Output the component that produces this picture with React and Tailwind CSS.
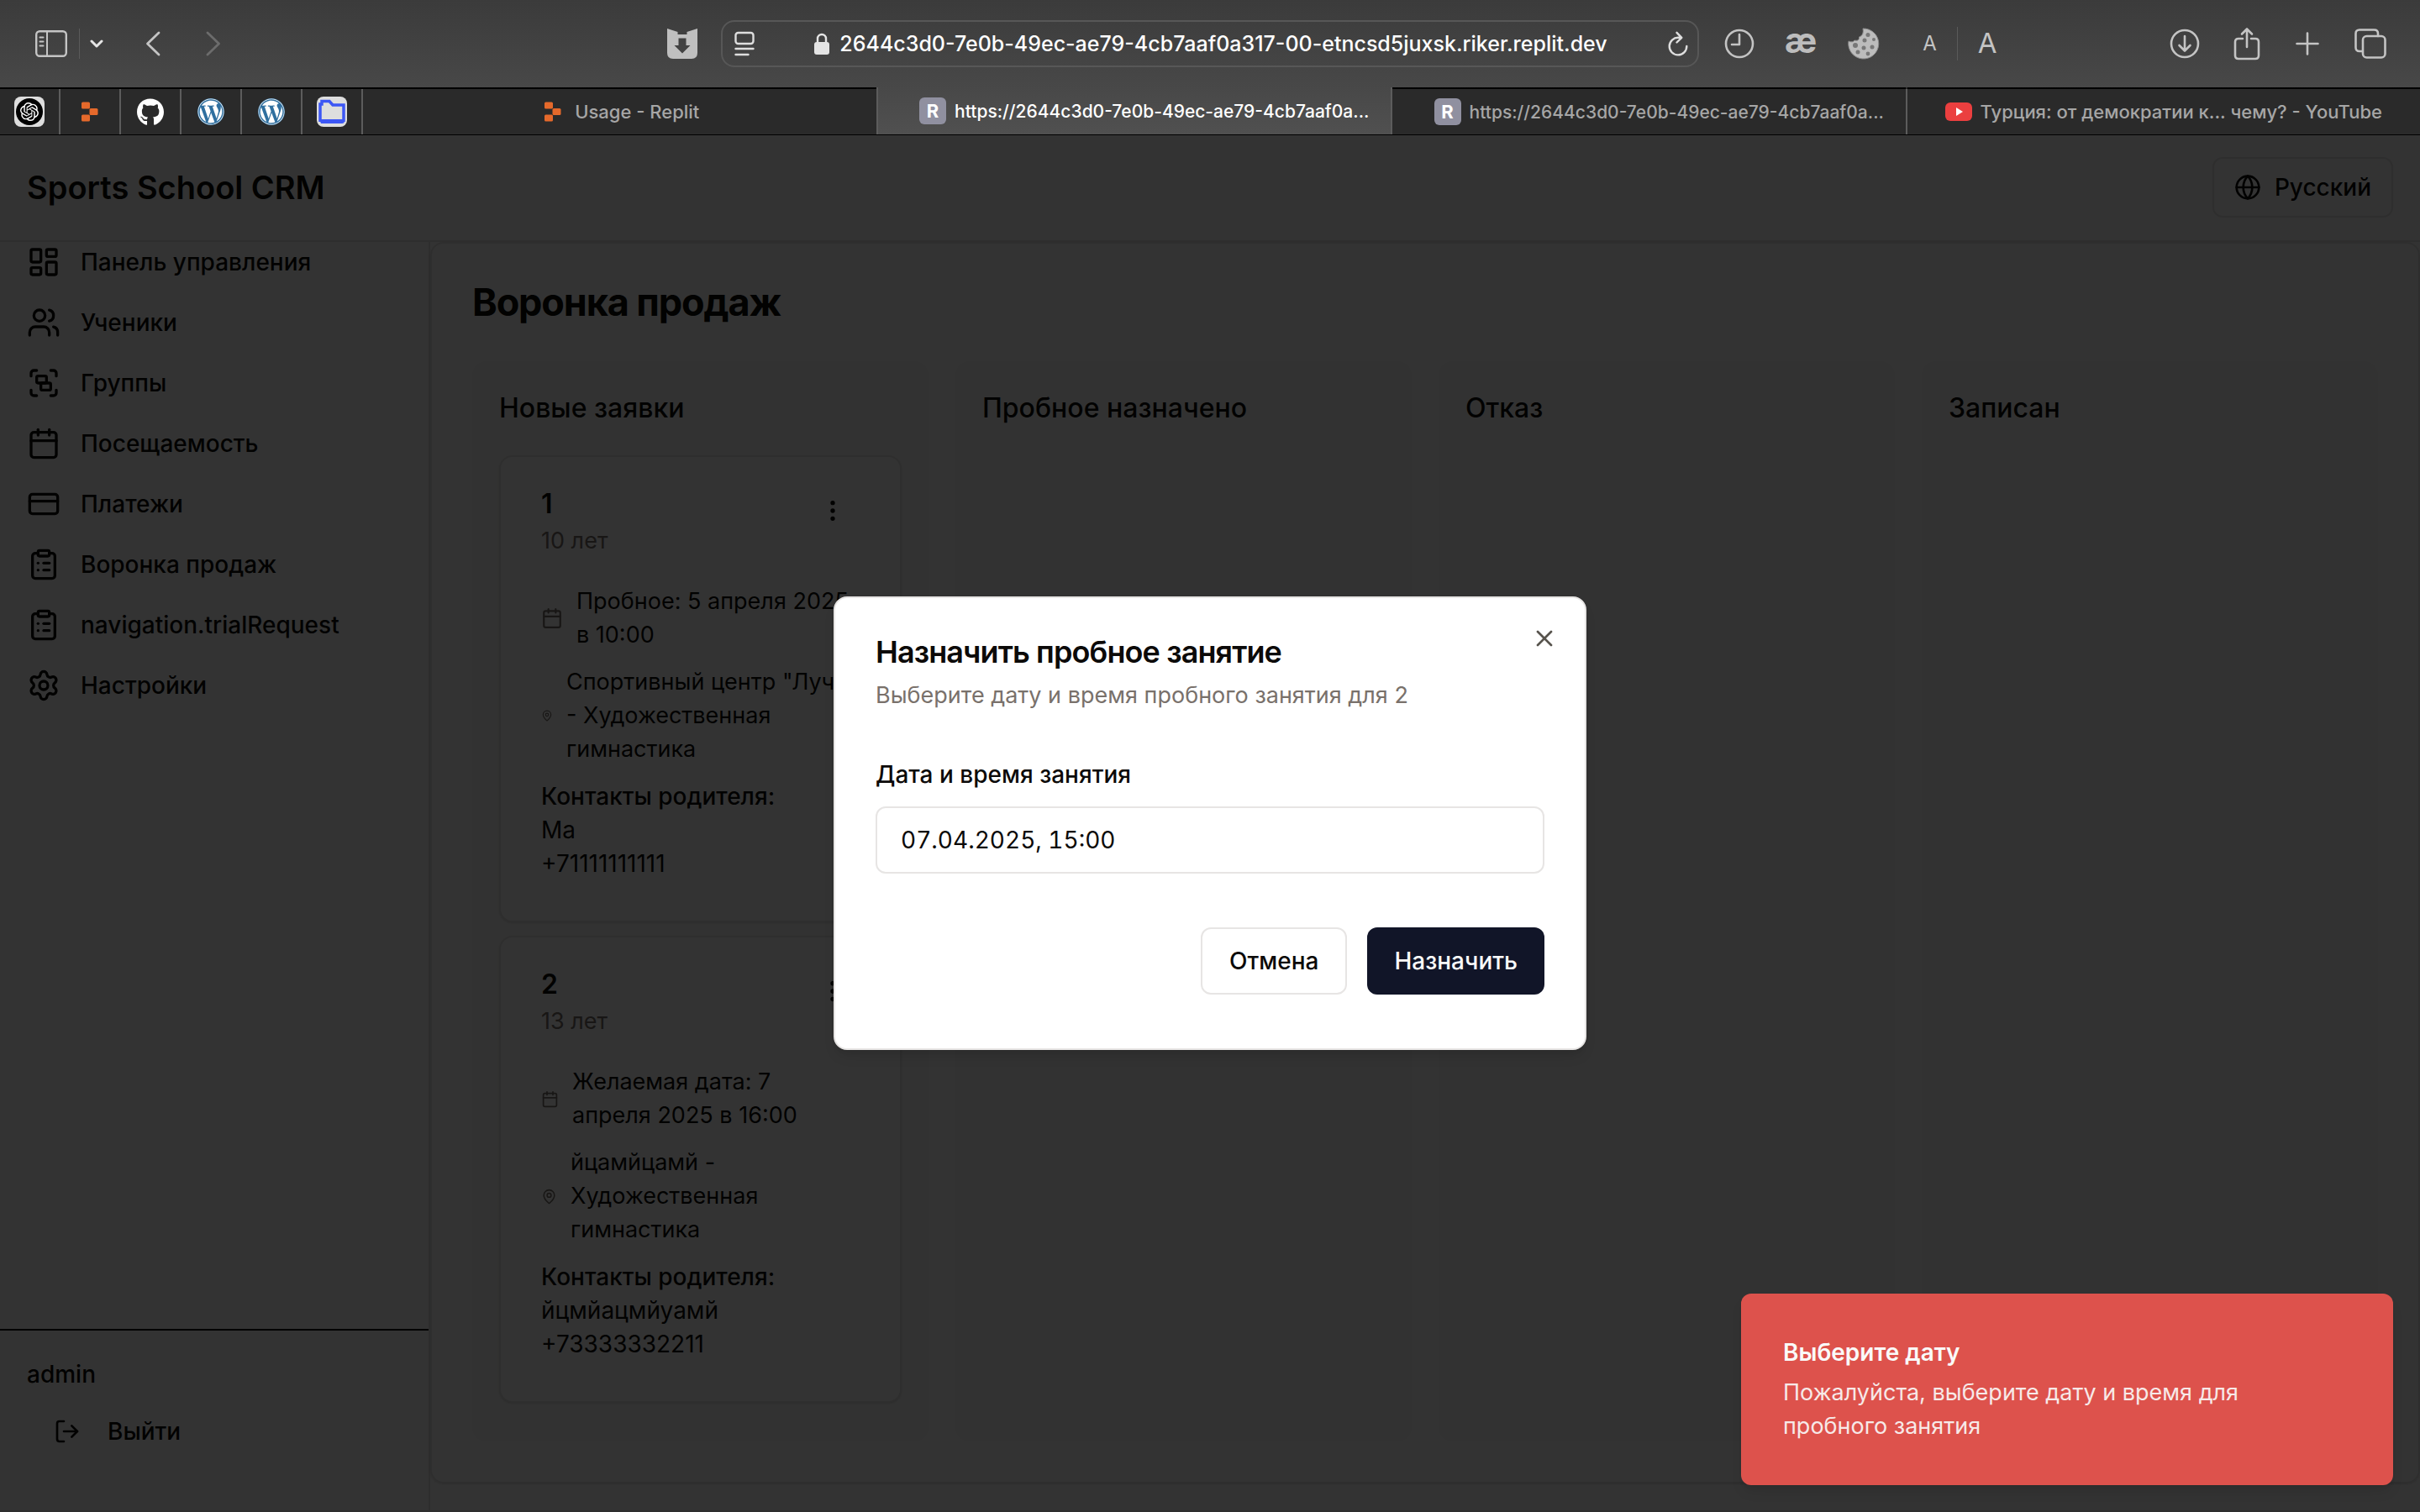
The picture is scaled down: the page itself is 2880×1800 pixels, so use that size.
import React from "react";
import { LayoutDashboard, Users, Group, Calendar, CreditCard, ClipboardList, Settings, LogOut, Globe, MapPin, MoreVertical, X } from "lucide-react";
import { FaGithub, FaWordpress } from "react-icons/fa";
import { SiOpenai } from "react-icons/si";

const stroke = { fill: "none", stroke: "currentColor", strokeLinecap: "round", strokeLinejoin: "round" };

function ReplitMark() {
  return (
    <svg viewBox="0 0 20 24" className="h-6 w-5" fill="#e5692b" aria-hidden="true">
      <rect x="0" y="0.500" width="10" height="8" rx="1.500" />
      <rect x="9.500" y="8" width="10" height="8" rx="1.500" />
      <rect x="0" y="15.500" width="10" height="8" rx="1.500" />
    </svg>
  );
}

function RBadge() {
  return (
    <span className="flex h-8 w-8 shrink-0 items-center justify-center rounded-md bg-[#9090a0] text-[22px] font-bold text-white">R</span>
  );
}

function Toolbar() {
  return (
    <div className="flex h-[104px] shrink-0 items-center bg-linear-to-b from-[#3b3b3b] to-[#484848] text-[#c4c4c4]">
      <div className="flex min-w-0 flex-1 items-center pr-7 pl-10">
        <button aria-label="Sidebar" className="ml-[2px]">
          <svg viewBox="0 0 38 32" className="h-8 w-[38px]" {...stroke} strokeWidth="2.4">
            <rect x="1.2" y="1.2" width="35.6" height="29.6" rx="4" />
            <path d="M14 1.5v29M5.5 8.5h4M5.5 13.5h4M5.5 18.5h4" strokeWidth="2" />
          </svg>
        </button>
        <span className="ml-[14px] h-9 w-px bg-[#5a5a5a]" />
        <button aria-label="Tab groups" className="ml-3">
          <svg viewBox="0 0 16 16" className="h-4 w-4 text-[#e6e6e6]" {...stroke} strokeWidth="3"><path d="M2 5l6 6 6-6" /></svg>
        </button>
        <button aria-label="Back" className="ml-[50px]">
          <svg viewBox="0 0 18 30" className="h-[30px] w-[18px]" {...stroke} strokeWidth="2.8"><path d="M16 2L2.500 15 16 28" /></svg>
        </button>
        <button aria-label="Forward" className="ml-[54px] text-[#6c6c6c]">
          <svg viewBox="0 0 18 30" className="h-[30px] w-[18px]" {...stroke} strokeWidth="2.8"><path d="M2 2l13.500 13L2 28" /></svg>
        </button>
        <button aria-label="Downloads helper" className="ml-auto">
          <svg viewBox="0 0 36 36" className="h-9 w-9" aria-hidden="true">
            <path fillRule="evenodd" d="M0 0l12.500 4v3h11V4L36 0v29q0 7-7 7H7q-7 0-7-7zM13.500 11.500v8.500H8.500l9.500 9.500 9.500-9.500h-5v-8.500z" fill="#bfbfbf" />
          </svg>
        </button>
      </div>
      <div className="flex h-14 w-[1164px] items-center rounded-2xl border-2 border-[#575757] pr-[10px] pl-[14px]">
        <svg viewBox="0 0 24 30" className="h-[30px] w-6 text-[#dedede]" {...stroke} strokeWidth="2.400">
          <rect x="1.500" y="2" width="21" height="13" rx="3" />
          <path d="M1.500 21h21M1.500 28h15" />
        </svg>
        <div className="flex flex-1 items-center justify-center gap-3">
          <svg viewBox="0 0 18 26" className="h-[26px] w-[18px]" aria-hidden="true">
            <rect x="0" y="11" width="18" height="15" rx="3" fill="#e4e4e4" />
            <path d="M4 12V7a5 5 0 0 1 10 0v5" fill="none" stroke="#e4e4e4" strokeWidth="2.400" />
          </svg>
          <span className="whitespace-nowrap text-[25px] leading-8 font-medium text-white">2644c3d0-7e0b-49ec-ae79-4cb7aaf0a317-00-etncsd5juxsk.riker.replit.dev</span>
        </div>
        <button aria-label="Reload">
          <svg viewBox="0 0 26 30" className="h-[30px] w-[26px] text-[#dedede]" {...stroke} strokeWidth="2.400">
            <path d="M17 7.800h-3.500A10.300 10.300 0 1 0 23.300 18M11.500 1.800L17.300 7.800l-5.800 5.700" />
          </svg>
        </button>
      </div>
      <div className="flex min-w-0 flex-1 items-center pr-10 pl-7">
        <button aria-label="History" className="ml-[2px]">
          <svg viewBox="0 0 36 36" className="h-9 w-9" {...stroke} strokeWidth="2.600"><circle cx="18" cy="18" r="16" /><path d="M18 7v12H9" /></svg>
        </button>
        <button aria-label="Extension ae" className="ml-9 text-[42px] leading-9 font-bold text-[#bdbdbd]">
          <span className="block pb-2">æ</span>
        </button>
        <button aria-label="Cookies" className="ml-9">
          <svg viewBox="0 0 40 40" className="h-10 w-10" aria-hidden="true">
            <path d="M19 2a18 18 0 1 1-17 15c3 1.500 6 1 7-1 4 1 6-1 5.500-4 4-1 5.500-5 4.500-10z" fill="#bcbcbc" stroke="#8c8c8c" />
            <g fill="#777"><circle cx="25" cy="9.500" r="2.500" /><circle cx="32" cy="15" r="2" /><circle cx="21" cy="16" r="2.500" /><circle cx="10" cy="22" r="3" /><circle cx="30" cy="24" r="2.500" /><circle cx="20" cy="25" r="2.500" /><circle cx="13" cy="30" r="2.500" /><circle cx="25" cy="32" r="2.400" /></g>
          </svg>
        </button>
        <button aria-label="Smaller text" className="ml-[50px] text-2xl">A</button>
        <span className="mx-6 h-10 w-px bg-[#5a5a5a]" />
        <button aria-label="Larger text" className="text-[33px]">A</button>
        <button aria-label="Downloads" className="ml-auto">
          <svg viewBox="0 0 36 36" className="h-9 w-9" {...stroke} strokeWidth="2.600"><circle cx="18" cy="18" r="16" /><path d="M18 9v17M11.500 20l6.500 6.500 6.500-6.500" /></svg>
        </button>
        <button aria-label="Share" className="ml-10">
          <svg viewBox="0 0 32 40" className="h-10 w-8" {...stroke} strokeWidth="2.600"><path d="M11 14H6q-4 0-4 4v16q0 4 4 4h20q4 0 4-4V18q0-4-4-4h-5M16 24V3M10 8.500L16 2.500l6 6" /></svg>
        </button>
        <button aria-label="New tab" className="ml-[42px]">
          <svg viewBox="0 0 28 28" className="h-7 w-7" {...stroke} strokeWidth="2.600"><path d="M14 1.500v25M1.500 14h25" /></svg>
        </button>
        <button aria-label="All tabs" className="ml-[42px]">
          <svg viewBox="0 0 38 36" className="h-9 w-[38px]" {...stroke} strokeWidth="2.600"><path d="M9 27H6q-4.500 0-4.500-4.500V6Q1.500 1.500 6 1.500h17.500q4.500 0 4.500 4.500v3" /><rect x="10" y="9" width="26.500" height="25.500" rx="4.500" /></svg>
        </button>
      </div>
    </div>
  );
}

function WordPress() {
  return (
    <span className="flex rounded-full bg-[#2f6f9f] text-white"><FaWordpress className="h-8 w-8" /></span>
  );
}

function TabBar() {
  const pin = "flex w-[72px] items-center justify-center border-r-2 border-[#5c5c5c]";
  const tab = "flex min-w-0 flex-1 items-center justify-center gap-[10px] border-t-2 border-black";
  const title = "whitespace-nowrap text-[22px] leading-8 font-medium";
  const address = "whitespace-nowrap pt-px text-[21px] leading-8 font-medium";
  return (
    <div className="flex h-14 shrink-0 bg-[#2a2a2a] text-[#a6a6a6]">
      <div className="flex border-t-2 border-black">
        <button aria-label="ChatGPT" className={pin}>
          <span className="flex h-9 w-9 items-center justify-center rounded-lg bg-[#dedede]">
            <span className="flex h-8 w-8 items-center justify-center rounded-full bg-black"><SiOpenai className="h-[22px] w-[22px] text-white" /></span>
          </span>
        </button>
        <button aria-label="Replit" className={pin}><ReplitMark /></button>
        <button aria-label="GitHub" className={pin}><FaGithub className="h-[33px] w-8 text-white" /></button>
        <button aria-label="WordPress" className={pin}><WordPress /></button>
        <button aria-label="WordPress" className={pin}><WordPress /></button>
        <button aria-label="Files" className={pin}>
          <span className="flex h-9 w-9 items-center justify-center rounded-lg bg-[#dedede]">
            <svg viewBox="0 0 34 30" className="h-[30px] w-[34px]" aria-hidden="true">
              <path d="M3 27V6h2V2.500h9L18 7h13v20" fill="none" stroke="#3d57f5" strokeWidth="3.500" />
              <path d="M2 24h30v2q0 3-3 3H4z" fill="#3d57f5" />
            </svg>
          </span>
        </button>
      </div>
      <button className={tab}><span className="flex w-8 justify-center"><ReplitMark /></span><span className={title}>Usage - Replit</span></button>
      <button className="flex min-w-0 flex-1 items-center justify-center border-x-2 border-[#5c5c5c] bg-linear-to-b from-[#484848] to-[#505050] text-white"><span className="flex items-center gap-[10px] pl-6"><RBadge /><span className={address}>https://2644c3d0-7e0b-49ec-ae79-4cb7aaf0a...</span></span></button>
      <button className={tab}><span className="flex items-center gap-[10px] pl-6"><RBadge /><span className={address}>https://2644c3d0-7e0b-49ec-ae79-4cb7aaf0a...</span></span></button>
      <span className="mt-[2px] w-[2px] bg-[#5c5c5c]" />
      <button className={tab}>
        <svg viewBox="0 0 32 22" className="h-[22px] w-8 shrink-0" aria-hidden="true"><rect width="32" height="22" rx="6" fill="#eb3f3f" /><path d="M13 6l8 5-8 5z" fill="#fff" /></svg>
        <span className={title}>Турция: от демократии к... чему? - YouTube</span>
      </button>
    </div>
  );
}

const nav = [
  [LayoutDashboard, "Панель управления"],
  [Users, "Ученики"],
  [Group, "Группы"],
  [Calendar, "Посещаемость"],
  [CreditCard, "Платежи"],
  [ClipboardList, "Воронка продаж"],
  [ClipboardList, "navigation.trialRequest"],
  [Settings, "Настройки"],
];

function Sidebar() {
  return (
    <aside className="flex w-[512px] shrink-0 flex-col border-r-2 border-stone-200">
      <nav className="flex flex-col">
        {nav.map(([Icon, label]) => (
          <a key={label} href="#" className="-mt-3 mb-3 flex h-[72px] items-center gap-6 px-8 font-medium"><Icon className="h-10 w-10" />{label}</a>
        ))}
      </nav>
      <div className="mt-auto border-t-2 border-black px-8 pt-8 pb-[62px]">
        <p className="font-medium">admin</p>
        <button className="mt-4 flex h-16 items-center gap-8 pl-8 font-medium"><LogOut className="h-8 w-8" />Выйти</button>
      </div>
    </aside>
  );
}

function Lead({ name, age, date, dateIcon, place, placeIcon, parent, phone }) {
  return (
    <article className="rounded-2xl border-2 border-stone-200 bg-white px-12 pb-12 shadow-sm">
      <div className="flex justify-between pt-8">
        <div>
          <h3 className="text-[32px] leading-[48px] font-semibold">{name}</h3>
          <p className="text-[27px] text-stone-500">{age}</p>
        </div>
        <button aria-label="Действия" className="flex h-16 w-16 items-center justify-center"><MoreVertical className="h-8 w-8" /></button>
      </div>
      <div className="mt-8 flex flex-col gap-4">
        <div className="flex items-center gap-4 text-[27px] whitespace-pre"><Calendar className={dateIcon} /><span>{date}</span></div>
        <div className="flex items-center gap-4 text-[27px] whitespace-pre"><MapPin className={placeIcon} /><span>{place}</span></div>
        <div>
          <p className="font-medium">Контакты родителя:</p>
          <p>{parent}</p>
          <p>{phone}</p>
        </div>
      </div>
    </article>
  );
}

function Column({ title, children }) {
  return (
    <section className="min-w-0 flex-1 rounded-2xl bg-stone-50 p-8">
      <h2 className="mb-8 text-[32px] leading-[48px] font-medium">{title}</h2>
      <div className="flex flex-col gap-4">{children}</div>
    </section>
  );
}

function Dialog() {
  return (
    <div role="dialog" aria-labelledby="dlg-title" className="relative w-[896px] rounded-2xl border-2 border-stone-200 bg-white p-12 shadow-lg">
      <h2 id="dlg-title" className="text-4xl leading-8 font-semibold tracking-tight">Назначить пробное занятие</h2>
      <p className="mt-4 text-[27px] text-stone-500">Выберите дату и время пробного занятия для 2</p>
      <label htmlFor="when" className="mt-[54px] block font-medium">Дата и время занятия</label>
      <input id="when" type="text" defaultValue="07.04.2025, 15:00" className="mt-[18px] block h-20 w-full rounded-xl border-2 border-stone-200 px-7 tabular-nums" />
      <div className="mt-16 mb-4 flex justify-end gap-6">
        <button className="h-20 rounded-xl border-2 border-stone-200 px-8 font-medium">Отмена</button>
        <button className="h-20 rounded-xl bg-[#111528] px-8 font-medium text-stone-50">Назначить</button>
      </div>
      <button aria-label="Закрыть" className="absolute top-8 right-8 text-stone-600"><X className="h-8 w-8" /></button>
    </div>
  );
}

export default function App() {
  return (
    <div className="flex min-h-screen flex-col bg-white font-[Inter,'Liberation_Sans',sans-serif]">
      <Toolbar />
      <TabBar />
      <div className="relative flex flex-1 flex-col border-t border-black text-[28px] leading-10 text-stone-950">
        <div className="flex flex-1 flex-col">
          <header className="flex h-[127px] items-center justify-between border-b-2 border-stone-200 px-8 pb-[2px]">
            <h1 className="text-[38px] leading-[56px] font-semibold">Sports School CRM</h1>
            <button className="flex h-[72px] items-center gap-4 rounded-xl border-2 border-stone-200 px-6 font-medium"><Globe className="h-8 w-8" />Русский</button>
          </header>
          <div className="flex flex-1 border-b-2 border-stone-200">
            <Sidebar />
            <main className="mb-8 flex min-w-0 flex-1 flex-col rounded-2xl border-2 border-stone-200 p-12 shadow-sm">
              <h1 className="text-[45px] leading-[44px] font-bold tracking-tight">Воронка продаж</h1>
              <div className="mt-12 flex flex-1 gap-8">
                <Column title="Новые заявки">
                  <Lead name="1" age="10 лет" date={"Пробное: 5 апреля 2025\nв 10:00"} dateIcon="size-[26px] text-stone-500 shrink-0" place={"Спортивный центр \"Луч\"\n- Художественная\nгимнастика"} placeIcon="size-[14px] text-stone-500 shrink-0" parent="Ма" phone="+71111111111" />
                  <Lead name="2" age="13 лет" date={"Желаемая дата: 7\nапреля 2025 в 16:00"} dateIcon="size-[21px] text-stone-500 shrink-0" place={"йцамйцамй -\nХудожественная\nгимнастика"} placeIcon="size-[19px] text-stone-500 shrink-0" parent="йцмйацмйуамй" phone="+73333332211" />
                </Column>
                <Column title="Пробное назначено" />
                <Column title="Отказ" />
                <Column title="Записан" />
              </div>
            </main>
          </div>
        </div>
        <div className="absolute inset-0 flex items-center justify-center bg-black/80 pb-[2px]">
          <Dialog />
        </div>
        <div role="alert" className="absolute right-8 bottom-8 w-[776px] rounded-xl bg-[#dd524c] px-[50px] py-[50px] text-stone-50 shadow-lg">
          <p className="font-semibold">Выберите дату</p>
          <p className="mt-2 text-[27px] opacity-90">Пожалуйста, выберите дату и время для<br />пробного занятия</p>
        </div>
      </div>
    </div>
  );
}
